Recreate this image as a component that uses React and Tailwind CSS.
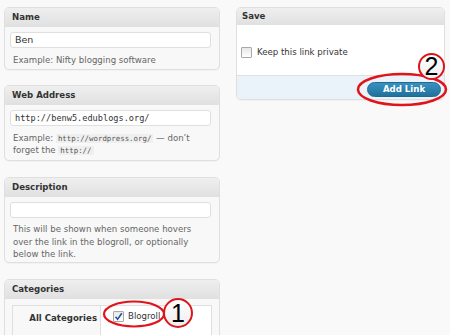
import React from "react";

function Box({ title, children, className = "" }) {
  return (
    <div className={"border border-[#dfdfdf] rounded-[5px] bg-[#f8f8f8] shadow-[0_1px_1px_rgba(0,0,0,0.03)] " + className}>
      <div className="h-[19px] flex items-center pl-[7px] font-bold text-[#333] rounded-t-[4px] bg-linear-to-b from-[#efefef] to-[#e0e0e0]">
        {title}
      </div>
      {children}
    </div>
  );
}

function Input({ children, mono = false }) {
  return (
    <div
      className={
        "h-[16px] bg-white border border-[#dfdfdf] rounded-[3px] flex items-center px-[4px] text-[#333] " +
        (mono ? "font-['DejaVu_Sans_Mono',monospace] text-[8.6px]" : "text-[9.5px]")
      }
    >
      {children}
    </div>
  );
}

function Code({ children }) {
  return (
    <span className="bg-[#efefef] px-[2px] font-['DejaVu_Sans_Mono',monospace] text-[7.4px] leading-[10px] text-[#555]">
      {children}
    </span>
  );
}

function CheckBox({ checked }) {
  return (
    <div className="w-[11px] h-[11px] border border-[#a8a8a8] rounded-[1px] bg-linear-to-b from-[#e8e8e8] to-[#ffffff] flex items-center justify-center shrink-0">
      {checked && (
        <svg width="9" height="9" viewBox="0 0 9 9">
          <path d="M1.5 4.8 L3.6 7.3 L7.8 1.2" fill="none" stroke="#24509e" strokeWidth="1.5" />
        </svg>
      )}
    </div>
  );
}

export default function App() {
  return (
    <div className="relative w-[450px] h-[335px] overflow-hidden bg-[#f9f9f9] font-['DejaVu_Sans',sans-serif] text-[8.6px] text-[#333]">
      <div className="flex items-start pt-[7px] pl-[4px] gap-[16px]">
        {/* left column */}
        <div className="w-[216px] flex flex-col">
          <Box title="Name">
            <div className="pt-[5px] pl-[5px] pr-[8px] pb-[3px]">
              <Input>Ben</Input>
              <div className="mt-[6px] pl-[3px] leading-[12px] text-[#666]">Example: Nifty blogging software</div>
            </div>
          </Box>

          <Box title="Web Address" className="mt-[15px]">
            <div className="pt-[5px] pl-[5px] pr-[8px] pb-[4px]">
              <Input mono>http://benw5.edublogs.org/</Input>
              <div className="mt-[6px] pl-[3px] leading-[12px] text-[#666]">
                <div className="whitespace-nowrap h-[12px]">
                  Example: <Code>http://wordpress.org/</Code> — don’t
                </div>
                <div className="whitespace-nowrap h-[12px]">
                  forget the <Code>http://</Code>
                </div>
              </div>
            </div>
          </Box>

          <Box title="Description" className="mt-[16px]">
            <div className="pt-[5px] pl-[5px] pr-[8px] pb-[1px]">
              <Input></Input>
              <div className="mt-[5px] pl-[3px] leading-[12.5px] text-[#666]">
                <div className="whitespace-nowrap">This will be shown when someone hovers</div>
                <div className="whitespace-nowrap">over the link in the blogroll, or optionally</div>
                <div className="whitespace-nowrap">below the link.</div>
              </div>
            </div>
          </Box>

          <Box title="Categories" className="mt-[16px]">
            <div className="pt-[6px] pl-[7px] pr-[7px]">
              <div className="flex h-[40px] border-t border-l border-r border-[#dfdfdf]">
                <div className="w-[87px] pt-[6px] pr-[3px] text-right font-bold text-[#333] leading-[12px]">
                  All Categories
                </div>
                <div className="flex-1 bg-white border-l border-[#dfdfdf] pl-[12px] pt-[5px]">
                  <div className="flex items-center gap-[4px] h-[12px] text-[#333]">
                    <CheckBox checked />
                    <span>Blogroll</span>
                  </div>
                </div>
              </div>
            </div>
          </Box>
        </div>

        {/* right column */}
        <div className="w-[209px] border border-[#dfdfdf] rounded-[5px] bg-white shadow-[0_1px_1px_rgba(0,0,0,0.03)]">
          <div className="h-[17px] flex items-center pl-[5px] font-bold text-[#333] rounded-t-[4px] bg-linear-to-b from-[#efefef] to-[#e0e0e0]">
            Save
          </div>
          <div className="h-[50px] pt-[21px] pl-[4px]">
            <div className="flex items-center gap-[5px] text-[#333]">
              <CheckBox />
              <span>Keep this link private</span>
            </div>
          </div>
          <div className="h-[24px] border-t border-[#dfdfdf] bg-[#eaf2fa] rounded-b-[4px] flex justify-end items-start pt-[6px] pr-[3px]">
            <div className="h-[15px] w-[74px] rounded-full bg-linear-to-b from-[#3891c2] to-[#21729a] border border-[#1e6a91] flex items-center justify-center text-white font-bold">
              Add Link
            </div>
          </div>
        </div>
      </div>

      {/* annotations */}
      <svg className="absolute left-0 top-0 pointer-events-none" width="450" height="335" viewBox="0 0 450 335">
        <ellipse cx="134" cy="314" rx="30" ry="12.5" fill="none" stroke="#e0141b" strokeWidth="2.2" />
        <ellipse cx="402" cy="89.5" rx="44" ry="15.5" fill="none" stroke="#e0141b" strokeWidth="2.5" />
      </svg>
      <div className="absolute left-[163px] top-[298px] w-[30px] h-[30px] rounded-full border-2 border-[#d9161c] bg-linear-to-b from-white to-[#eeeeee] flex items-center justify-center font-['Liberation_Sans',sans-serif] text-[25px] leading-none text-black">
        1
      </div>
      <div className="absolute left-[418px] top-[53px] w-[27px] h-[27px] rounded-full border-2 border-[#d9161c] bg-linear-to-b from-white to-[#eeeeee] flex items-center justify-center font-['Liberation_Sans',sans-serif] text-[25px] leading-none text-black">
        2
      </div>
    </div>
  );
}
